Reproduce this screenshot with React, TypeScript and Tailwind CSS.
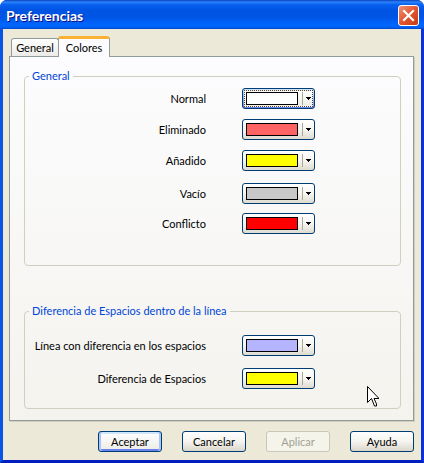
import type { ReactNode } from "react";

type ColorOption = { id: string; label: string; swatch: string; focused?: boolean };

const generalColors: ColorOption[] = [
  { id: "normal", label: "Normal", swatch: "bg-white", focused: true },
  { id: "eliminado", label: "Eliminado", swatch: "bg-[#ff6464]" },
  { id: "anadido", label: "Añadido", swatch: "bg-[#ffff00]" },
  { id: "vacio", label: "Vacío", swatch: "bg-[#c8c8c8]" },
  { id: "conflicto", label: "Conflicto", swatch: "bg-[#ff0000]" },
];

const inlineColors: ColorOption[] = [
  { id: "linea", label: "Línea con diferencia en los espacios", swatch: "bg-[#b4b4ff]" },
  { id: "espacios", label: "Diferencia de Espacios", swatch: "bg-[#ffff00]" },
];

function ColorRow({ id, label, swatch, focused }: ColorOption) {
  return (
    <>
      <label htmlFor={id} className="text-right leading-[21px] whitespace-nowrap">
        {label}
      </label>
      <button
        id={id}
        type="button"
        aria-haspopup="listbox"
        className={
          "flex h-[21px] w-[73px] items-center rounded-[3px] border border-[#003c74] p-px " +
          (focused
            ? "bg-linear-to-b from-[#cee7ff] to-[#6982ee]"
            : "bg-linear-to-b from-white via-[#f6f5f1] to-[#dedbd0]")
        }
      >
        <span
          className={
            "flex h-full w-full items-center border pl-px " +
            (focused
              ? "border-dotted border-[#5c4430] bg-linear-to-b from-white to-[#eeede6]"
              : "border-transparent")
          }
        >
          <span className={"h-[13px] w-[52px] border border-black " + swatch} />
          <span className="ml-1 h-[13px] w-px bg-[#aca899]" />
          <svg className="ml-[3px]" width="5" height="3" viewBox="0 0 5 3" shapeRendering="crispEdges" aria-hidden="true">
            <path d="M0 0h5v1H4v1H3v1H2V2H1V1H0z" fill="#000" />
          </svg>
        </span>
      </button>
    </>
  );
}

function Group({ title, className, children }: { title: string; className: string; children: ReactNode }) {
  return (
    <fieldset className="rounded-[4px] border border-[#d0d0bf]">
      <legend className="ml-1 px-[3px] leading-4 text-[#0046d5]">{title}</legend>
      <div className={"grid grid-cols-[181px_73px] gap-x-9 " + className}>{children}</div>
    </fieldset>
  );
}

function DialogButton({ children, primary, disabled }: { children: ReactNode; primary?: boolean; disabled?: boolean }) {
  const look = disabled
    ? "border-[#c9c7ba] bg-[#f5f4ea] text-[#a1a192]"
    : primary
      ? "border-[#003c74] bg-linear-to-b from-white to-[#ecebe6] shadow-[inset_2px_0_0_#a9c4f5,inset_-2px_0_0_#a9c4f5,inset_0_2px_0_#cee7ff,inset_0_-2px_0_#6982ee]"
      : "border-[#003c74] bg-linear-to-b from-white via-[#f5f4f0] to-[#dad6ca]";
  return (
    <button type="button" disabled={disabled} className={"h-[21px] w-16 rounded-[3px] border leading-[19px] " + look}>
      {children}
    </button>
  );
}

export default function App() {
  return (
    <div className="relative flex min-h-screen flex-col overflow-hidden rounded-t-[7px] bg-[#0831d9] font-[Lato,'Open_Sans',sans-serif] text-[11px] text-black">
      <header className="flex h-[29px] items-center justify-between bg-[linear-gradient(180deg,#0a3fc0_0%,#2b84f8_7%,#0860f0_16%,#0054e3_35%,#0055e5_60%,#0066ff_85%,#0062f5_94%,#0045c8_100%)] pt-0.5 pr-[5px] pl-[6px]">
        <h1 className="text-[14px] leading-5 font-bold text-white [text-shadow:1px_1px_#0f1089]">
          Preferencias
        </h1>
        <button
          type="button"
          aria-label="Cerrar"
          className="flex size-[21px] items-center justify-center rounded-[3px] border border-white bg-linear-to-br from-[#ee9075] via-[#e2552f] to-[#c43c10]"
        >
          <svg width="13" height="13" viewBox="0 0 13 13" aria-hidden="true">
            <path d="M2 2l9 9M11 2l-9 9" stroke="#fff" strokeWidth="2.2" strokeLinecap="square" />
          </svg>
        </button>
      </header>

      <main className="flex flex-1 flex-col border-x-3 border-b-3 border-r-[#0831d9] border-b-[#001dc0] border-l-[#0855e5] bg-[#ece9d8] px-[7px] pt-[7px] pb-2">
        <div role="tablist" className="relative z-10 -mb-px flex items-end">
          <button
            type="button"
            role="tab"
            aria-selected="false"
            className="mb-px ml-px h-[18px] w-12 rounded-t-[3px] border border-b-0 border-[#919b9c] bg-linear-to-b from-white to-[#ecebe6] leading-[18px]"
          >
            General
          </button>
          <button
            type="button"
            role="tab"
            aria-selected="true"
            className="-ml-px h-[21px] w-[52px] rounded-t-[3px] border border-t-3 border-b-0 border-[#919b9c] border-t-[#f9b233] bg-[#fcfcfe] pb-px leading-[17px]"
          >
            Colores
          </button>
        </div>

        <section
          role="tabpanel"
          className="-ml-px flex flex-1 flex-col justify-between border border-[#919b9c] bg-linear-to-b from-[#fcfcfe] to-[#f4f3ee] pt-[11px] pr-3 pb-[11px] pl-[14px] shadow-[1px_1px_#d0cebf]"
        >
          <Group title="General" className="grid-rows-[31px_31px_33px_30px_21px] pt-1 pb-[31px]">
            {generalColors.map((c) => (
              <ColorRow key={c.id} {...c} />
            ))}
          </Group>
          <Group title="Diferencia de Espacios dentro de la línea" className="grid-rows-[33px_21px] pt-4 pb-[19px]">
            {inlineColors.map((c) => (
              <ColorRow key={c.id} {...c} />
            ))}
          </Group>
        </section>

        <footer className="mt-[10px] flex justify-end gap-5">
          <DialogButton primary>Aceptar</DialogButton>
          <DialogButton>Cancelar</DialogButton>
          <DialogButton disabled>Aplicar</DialogButton>
          <DialogButton>Ayuda</DialogButton>
        </footer>
      </main>

      <svg className="absolute right-[45px] bottom-[56px]" width="12" height="21" viewBox="0 0 12 21" aria-hidden="true">
        <path d="M.5 .5v16l4-4 3 7.500h2v-2l-2.500-5.500h5z" fill="#fff" stroke="#000" />
      </svg>
    </div>
  );
}
